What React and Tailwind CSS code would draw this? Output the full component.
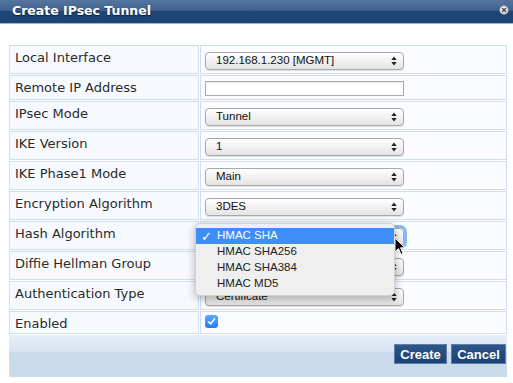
import React from "react";

const rows = [
  { label: "Local Interface", type: "select", value: "192.168.1.230 [MGMT]" },
  { label: "Remote IP Address", type: "input" },
  { label: "IPsec Mode", type: "select", value: "Tunnel" },
  { label: "IKE Version", type: "select", value: "1" },
  { label: "IKE Phase1 Mode", type: "select", value: "Main" },
  { label: "Encryption Algorithm", type: "select", value: "3DES" },
  { label: "Hash Algorithm", type: "select", value: "HMAC SHA", focused: true },
  { label: "Diffie Hellman Group", type: "select", value: "Group 2" },
  { label: "Authentication Type", type: "select", value: "Certificate" },
  { label: "Enabled", type: "checkbox" },
];

const hashOptions = ["HMAC SHA", "HMAC SHA256", "HMAC SHA384", "HMAC MD5"];

const Arrows = () => (
  <svg width="6" height="10" viewBox="0 0 6 10" className="shrink-0">
    <path d="M3 0.5 L5.7 4 L0.3 4 Z" fill="#222" />
    <path d="M3 9.5 L5.7 6 L0.3 6 Z" fill="#222" />
  </svg>
);

const FakeSelect = ({ value, focused }) => (
  <div
    className={`w-[199px] h-[18px] mt-[6px] flex items-center justify-between pl-[10px] pr-[6px] rounded-[4px] border border-[#a8a8a8] bg-[linear-gradient(to_bottom,#ffffff,#f1f1f1_50%,#e4e4e4)] shadow-[0_1px_1px_rgba(0,0,0,0.12)] ${
      focused ? "ring-[3px] ring-[#8ab8f2]" : ""
    }`}
  >
    <span className="text-[11.5px] leading-none text-[#111] font-['Liberation_Sans',Arial,sans-serif]">
      {value}
    </span>
    <Arrows />
  </div>
);

const Cell = ({ row }) => {
  if (row.type === "input") {
    return (
      <div className="w-[199px] h-[15px] mt-[5px] border border-[#a9a9a9] bg-white shadow-[inset_0_1px_1px_rgba(0,0,0,0.08)]" />
    );
  }
  if (row.type === "checkbox") {
    return (
      <div className="w-[13px] h-[13px] mt-[3px] rounded-[3px] bg-[linear-gradient(to_bottom,#5aaeff,#1e7cf4)] flex items-center justify-center">
        <svg width="9" height="9" viewBox="0 0 9 9">
          <path d="M1.5 4.8 L3.6 7 L7.6 1.8" stroke="#fff" strokeWidth="1.6" fill="none" strokeLinecap="round" strokeLinejoin="round" />
        </svg>
      </div>
    );
  }
  return <FakeSelect value={row.value} focused={row.focused} />;
};

const rowHeight = (row) => {
  if (row.type === "input") return "h-[25px]";
  if (row.type === "checkbox") return "h-[23px]";
  return "h-[29px]";
};

export default function App() {
  return (
    <div className="relative w-[513px] h-[383px] overflow-hidden bg-white">
      {/* title bar */}
      <div className="h-[24px] border-b border-[#9db5d6] bg-[linear-gradient(to_bottom,#56769f,#3e6090_45%,#1f4577_48%,#1d4476)] flex items-center justify-between pl-[12px] pr-[4px]">
        <span className="text-[12.5px] font-bold text-white font-['DejaVu_Sans',Verdana,sans-serif] [text-shadow:0_1px_1px_rgba(0,0,0,0.6)]">
          Create IPsec Tunnel
        </span>
        <div className="w-[10px] h-[10px] mb-[4px] rounded-full bg-[radial-gradient(circle_at_40%_35%,#ffffff,#c9c9c9)] border border-[#7f8a99] flex items-center justify-center">
          <svg width="6" height="6" viewBox="0 0 6 6">
            <path d="M1 1 L5 5 M5 1 L1 5" stroke="#444" strokeWidth="1.3" />
          </svg>
        </div>
      </div>

      {/* form table */}
      <div className="pt-[21px] pl-[9px] pr-[6px]">
        <div className="grid grid-cols-[190px_307px] gap-px">
          {rows.map((row) => (
            <React.Fragment key={row.label}>
              <div
                className={`${rowHeight(row)} border border-[#cfdcf2] bg-[#f6faff] pl-[5px] pt-[4px] text-[13px] leading-[16px] text-[#2a2a2a] font-['DejaVu_Sans',Verdana,sans-serif]`}
              >
                {row.label}
              </div>
              <div className={`${rowHeight(row)} border border-[#cfdcf2] bg-[#fbfcff] pl-[4px]`}>
                <Cell row={row} />
              </div>
            </React.Fragment>
          ))}
        </div>

        {/* footer */}
        <div className="mt-px h-[42px] bg-[linear-gradient(to_bottom,#e7eef8,#d6e3f0_40%,#c9dbea_42%,#c9dbea)] flex items-start justify-end gap-[4px] pt-[9px] pr-px">
          <button className="w-[53px] h-[20px] border border-[#5d7ea8] bg-[linear-gradient(to_bottom,#2f5688,#1c4174)] text-white text-[13px] font-bold leading-none font-['Liberation_Sans',Arial,sans-serif]">
            Create
          </button>
          <button className="w-[55px] h-[20px] border border-[#5d7ea8] bg-[linear-gradient(to_bottom,#2f5688,#1c4174)] text-white text-[13px] font-bold leading-none font-['Liberation_Sans',Arial,sans-serif]">
            Cancel
          </button>
        </div>
      </div>

      {/* open dropdown for Hash Algorithm */}
      <div className="absolute left-[195px] top-[223px] w-[200px] h-[73px] rounded-[5px] bg-[#efefef] border border-[#d0d0d0] shadow-[0_3px_8px_rgba(0,0,0,0.3)] pt-[4px] font-['Liberation_Sans',Arial,sans-serif]">
        {hashOptions.map((opt, i) => (
          <div
            key={opt}
            className={`h-[16px] flex items-center text-[11.5px] ${
              i === 0 ? "bg-[#3d8ef7] text-white" : "text-[#222]"
            }`}
          >
            <span className="w-[21px] pl-[5px] text-[13px] leading-none font-['DejaVu_Sans',sans-serif]">{i === 0 ? "✓" : ""}</span>
            {opt}
          </div>
        ))}
      </div>

      {/* mouse pointer */}
      <svg className="absolute left-[394px] top-[237px]" width="12" height="19" viewBox="0 0 12 19">
        <path d="M1 1 L1 15 L4.5 11.5 L7 17.5 L9 16.6 L6.6 10.8 L11 10.8 Z" fill="#000" stroke="#fff" strokeWidth="1" strokeLinejoin="round" />
      </svg>
    </div>
  );
}
